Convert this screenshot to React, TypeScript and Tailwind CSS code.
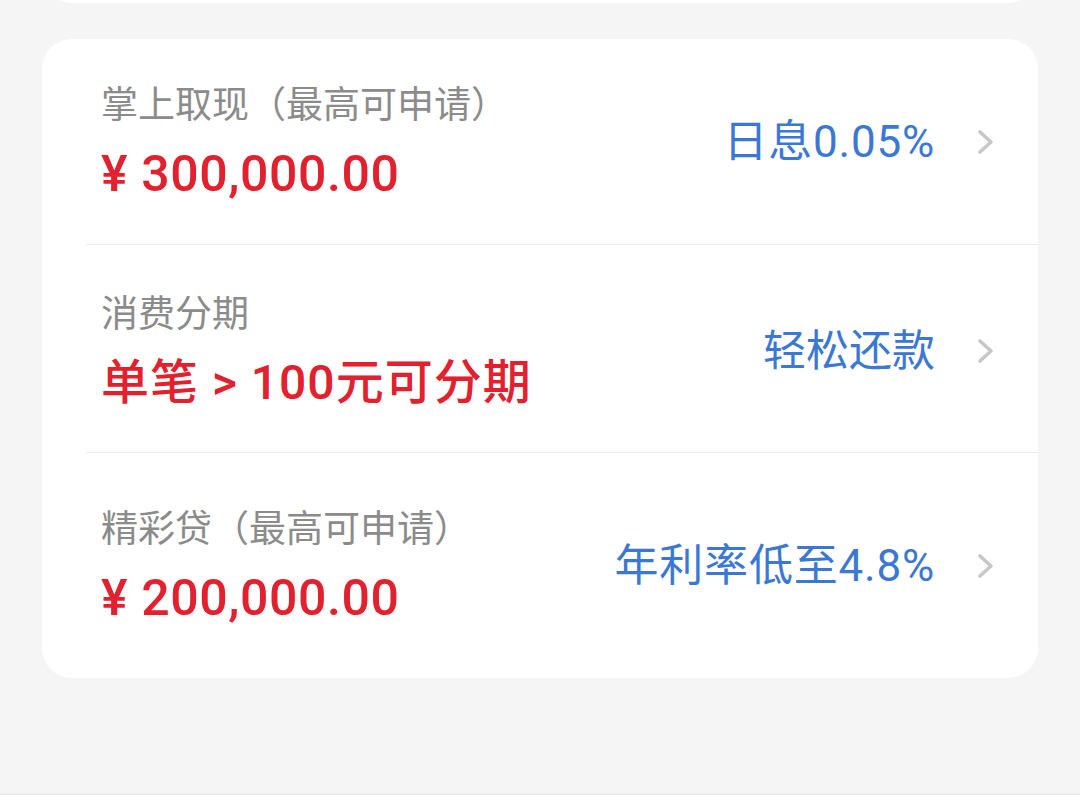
import React from "react";

interface LoanRow {
  label: string;
  value: string;
  hint: string;
  boxClass: string;
  valueClass: string;
  hintClass: string;
}

const rows: LoanRow[] = [
  {
    label: "掌上取现（最高可申请）",
    value: "¥ 300,000.00",
    hint: "日息0.05%",
    boxClass: "h-[205px]",
    valueClass: "text-[50px] tracking-[0.6px]",
    hintClass: "text-[44px] tracking-[0.8px]",
  },
  {
    label: "消费分期",
    value: "单笔 > 100元可分期",
    hint: "轻松还款",
    boxClass: "h-[208px] pt-[5px]",
    valueClass: "text-[48px] tracking-[1px]",
    hintClass: "text-[43px]",
  },
  {
    label: "精彩贷（最高可申请）",
    value: "¥ 200,000.00",
    hint: "年利率低至4.8%",
    boxClass: "h-[226px]",
    valueClass: "text-[50px] tracking-[0.6px]",
    hintClass: "text-[44px] tracking-[0.8px]",
  },
];

const Chevron = () => (
  <svg className="w-[18px] h-[26px] shrink-0" viewBox="0 0 18 26" fill="none">
    <path
      d="M3 3l11 10-11 10"
      stroke="#c7c7c7"
      strokeWidth="3.6"
      strokeLinecap="round"
      strokeLinejoin="round"
    />
  </svg>
);

export default function App() {
  return (
    <div className="w-[1080px] h-[795px] overflow-hidden bg-[#f5f5f5] flex flex-col font-['Roboto','Noto_Sans_CJK_SC',sans-serif]">
      {/* bottom of previous card */}
      <div className="mx-[42px] -mt-[57px] h-[60px] rounded-[30px] bg-white shrink-0" />

      <div className="mx-[42px] mt-[36px] rounded-[30px] bg-white overflow-hidden shrink-0">
        <div className="ml-[44px]">
          {rows.map((row, i) => (
            <div
              key={row.label}
              className={[
                "flex items-center justify-between pl-[15px] pr-[43px]",
                row.boxClass,
                i > 0 ? "border-t border-[#ebebeb]" : "",
              ].join(" ")}
            >
              <div className="flex flex-col">
                <span className="text-[37px] leading-[48px] text-[#8b8b8b]">
                  {row.label}
                </span>
                <span
                  className={[
                    "mt-[16px] leading-[56px] font-medium text-[#e3202d]",
                    row.valueClass,
                  ].join(" ")}
                >
                  {row.value}
                </span>
              </div>
              <div className="flex items-center gap-[42px]">
                <span
                  className={["leading-[52px] text-[#3b78d6]", row.hintClass].join(" ")}
                >
                  {row.hint}
                </span>
                <Chevron />
              </div>
            </div>
          ))}
        </div>
      </div>

      <div className="flex-1" />
      <div className="h-[2px] bg-[#ececec] shrink-0" />
    </div>
  );
}
